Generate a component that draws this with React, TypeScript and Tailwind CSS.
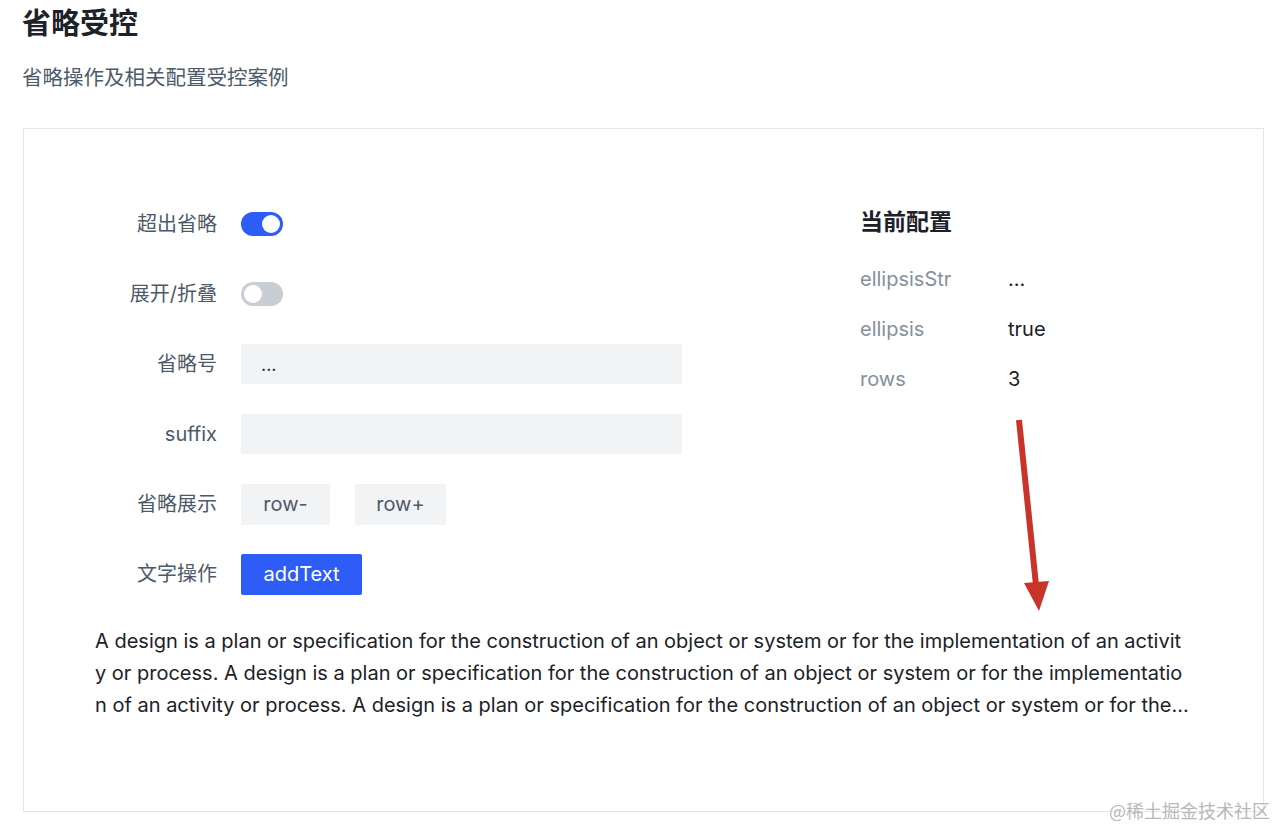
import React from "react";

const font = { fontFamily: "Inter, 'Noto Sans CJK SC', sans-serif" };

const lines = [
  "A design is a plan or specification for the construction of an object or system or for the implementation of an activit",
  "y or process. A design is a plan or specification for the construction of an object or system or for the implementatio",
  "n of an activity or process. A design is a plan or specification for the construction of an object or system or for the...",
];

function Switch({ on }: { on: boolean }) {
  return (
    <span
      className={`relative inline-flex h-[24px] w-[42px] items-center rounded-full ${
        on ? "bg-[#2e5cf6] justify-end" : "bg-[#c9cdd4] justify-start"
      } px-[3px]`}
    >
      <span className="h-[18px] w-[18px] rounded-full bg-white" />
    </span>
  );
}

function Row({ label, children }: { label: string; children: React.ReactNode }) {
  return (
    <div className="flex h-[40px] items-center">
      <div className="w-[122px] text-right text-[20px] text-[#4e5969]">{label}</div>
      <div className="ml-[24px] flex flex-1 items-center gap-[25px]">{children}</div>
    </div>
  );
}

export default function App() {
  return (
    <div className="relative min-h-[827px] bg-white" style={font}>
      <div className="px-[22px] pt-[4px]">
        <h1 className="text-[29px] font-bold leading-[40px] text-[#1d2129]">省略受控</h1>
        <p className="mt-[18px] text-[20.5px] leading-[32px] text-[#4e5969]">省略操作及相关配置受控案例</p>
      </div>

      <div className="mx-[23px] mt-[34px] w-[1241px] border border-[#e5e6eb] pl-[71px] pt-[75px] pb-[90px]">
        <div className="flex">
          <div className="flex w-[587px] flex-col gap-[30px]">
            <Row label="超出省略">
              <Switch on />
            </Row>
            <Row label="展开/折叠">
              <Switch on={false} />
            </Row>
            <Row label="省略号">
              <div className="flex h-[40px] w-[441px] items-center rounded-[2px] bg-[#f2f3f5] px-[20px] text-[18px] text-[#1d2129]">
                ...
              </div>
            </Row>
            <Row label="suffix">
              <div className="h-[40px] w-[441px] rounded-[2px] bg-[#f2f3f5]" />
            </Row>
            <Row label="省略展示">
              <button className="flex h-[41px] w-[89px] items-center justify-center rounded-[2px] bg-[#f2f3f5] text-[20px] text-[#4e5969]">
                row-
              </button>
              <button className="flex h-[41px] w-[91px] items-center justify-center rounded-[2px] bg-[#f2f3f5] text-[20px] text-[#4e5969]">
                row+
              </button>
            </Row>
            <Row label="文字操作">
              <button className="flex h-[41px] w-[121px] items-center justify-center rounded-[2px] bg-[#2e5cf6] text-[20px] text-white">
                addText
              </button>
            </Row>
          </div>

          <div className="ml-[178px] flex flex-col pt-[2px]">
            <h2 className="text-[23px] font-bold leading-[32px] text-[#1d2129]">当前配置</h2>
            <div className="mt-[25px] flex flex-col gap-[18px] text-[20px] leading-[32px]">
              <div className="flex">
                <span className="w-[148px] text-[#86909c]">ellipsisStr</span>
                <span className="text-[#1d2129]">...</span>
              </div>
              <div className="flex">
                <span className="w-[148px] text-[#86909c]">ellipsis</span>
                <span className="text-[#1d2129]">true</span>
              </div>
              <div className="flex">
                <span className="w-[148px] text-[#86909c]">rows</span>
                <span className="text-[#1d2129]">3</span>
              </div>
            </div>
          </div>
        </div>

        <div className="mt-[31px] text-[20px] leading-[32px] text-[#1d2129]">
          {lines.map((l) => (
            <div key={l} className="whitespace-nowrap">
              {l}
            </div>
          ))}
        </div>
      </div>

      {/* annotation arrow */}
      <svg className="pointer-events-none absolute left-[1010px] top-[415px]" width="50" height="200" viewBox="0 0 50 200">
        <line x1="9" y1="5" x2="26" y2="170" stroke="#c9342a" strokeWidth="6" />
        <polygon points="14,168 39,166 29,196" fill="#c9342a" />
      </svg>

      <div className="pointer-events-none absolute right-[10px] top-[797px] text-[18px] text-[#b8b8b8]" style={{ fontFamily: "'Noto Sans CJK SC', sans-serif" }}>
        @稀土掘金技术社区
      </div>
    </div>
  );
}
